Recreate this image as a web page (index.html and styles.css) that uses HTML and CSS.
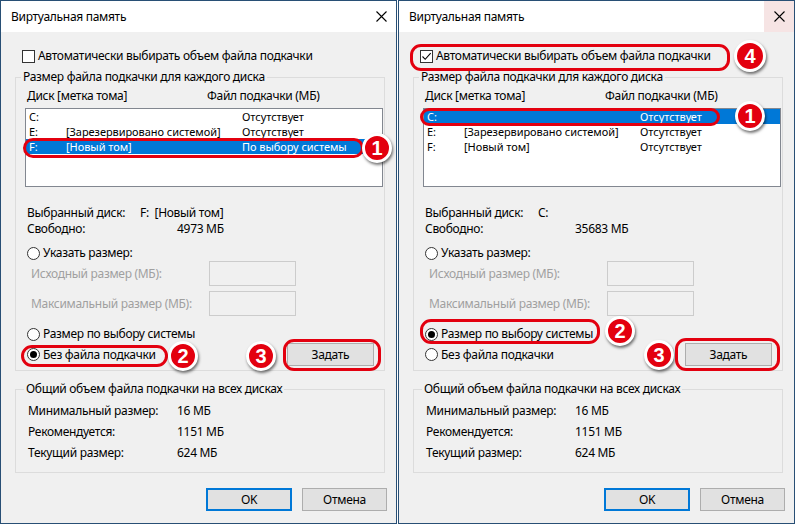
FILE: index.html
```html
<!DOCTYPE html>
<html lang="ru">
<head>
<meta charset="utf-8">
<title>Виртуальная память</title>
<link rel="stylesheet" href="styles.css">
</head>
<body>
<div class="screen">
  <section class="dialog">
    <header class="titlebar">
      <span class="title">Виртуальная память</span>
      <span class="close"><svg width="11" height="11" viewBox="0 0 11 11"><path d="M0.5 0.5L10.5 10.5M10.5 0.5L0.5 10.5" stroke="#000" stroke-width="1.1" fill="none"/></svg></span>
    </header>
    <div class="body">
      <div class="check-row"><span class="checkbox"></span><span>Автоматически выбирать объем файла подкачки</span></div>
      <fieldset class="group drives">
        <legend>Размер файла подкачки для каждого диска</legend>
        <div class="list-head"><span>Диск [метка тома]</span><span>Файл подкачки (МБ)</span></div>
        <div class="listbox">
          <div class="row"><span>C:</span><span></span><span>Отсутствует</span></div>
          <div class="row"><span>E:</span><span>[Зарезервировано системой]</span><span>Отсутствует</span></div>
          <div class="row selected"><span>F:</span><span>[Новый том]</span><span>По выбору системы</span></div>
        </div>
        <div class="info-row first"><span class="k">Выбранный диск:</span><span>F:&nbsp; [Новый том]</span></div>
        <div class="info-row free"><span class="k">Свободно:</span><span>4973 МБ</span></div>
        <div class="radio-row custom"><span class="radio"></span><span>Указать размер:</span></div>
        <div class="size-row"><span class="disabled">Исходный размер (МБ):</span><span class="input"></span></div>
        <div class="size-row second"><span class="disabled">Максимальный размер (МБ):</span><span class="input"></span></div>
        <div class="radio-row system"><span class="radio"></span><span>Размер по выбору системы</span></div>
        <div class="last-row">
          <div class="radio-row"><span class="radio on"></span><span>Без файла подкачки</span></div>
          <span class="btn set">Задать</span>
        </div>
      </fieldset>
      <fieldset class="group totals">
        <legend>Общий объем файла подкачки на всех дисках</legend>
        <div class="total-row"><span class="k">Минимальный размер:</span><span>16 МБ</span></div>
        <div class="total-row"><span class="k">Рекомендуется:</span><span>1151 МБ</span></div>
        <div class="total-row"><span class="k">Текущий размер:</span><span>624 МБ</span></div>
      </fieldset>
      <div class="footer"><span class="btn ok">OK</span><span class="btn cancel">Отмена</span></div>
    </div>
    <span class="mark" style="left:22px;top:137px;width:341px;height:20px"></span>
    <span class="badge" style="left:361px;top:132px">1</span>
    <span class="mark" style="left:20px;top:344px;width:147px;height:22px"></span>
    <span class="badge" style="left:167px;top:340px">2</span>
    <span class="badge" style="left:245px;top:340px">3</span>
    <span class="mark" style="left:282px;top:338px;width:98px;height:32px"></span>
  </section>

  <section class="dialog">
    <header class="titlebar">
      <span class="title">Виртуальная память</span>
      <span class="close hover"><svg width="11" height="11" viewBox="0 0 11 11"><path d="M0.5 0.5L10.5 10.5M10.5 0.5L0.5 10.5" stroke="#000" stroke-width="1.1" fill="none"/></svg></span>
    </header>
    <div class="body">
      <div class="check-row"><span class="checkbox checked"><svg width="11" height="11" viewBox="0 0 11 11"><path d="M1.5 5.5L4.2 8.3L9.7 2.2" stroke="#000" stroke-width="1.1" fill="none"/></svg></span><span>Автоматически выбирать объем файла подкачки</span></div>
      <fieldset class="group drives">
        <legend>Размер файла подкачки для каждого диска</legend>
        <div class="list-head"><span>Диск [метка тома]</span><span>Файл подкачки (МБ)</span></div>
        <div class="listbox">
          <div class="row selected"><span>C:</span><span></span><span>Отсутствует</span></div>
          <div class="row"><span>E:</span><span>[Зарезервировано системой]</span><span>Отсутствует</span></div>
          <div class="row"><span>F:</span><span>[Новый том]</span><span>Отсутствует</span></div>
        </div>
        <div class="info-row first"><span class="k">Выбранный диск:</span><span>C:</span></div>
        <div class="info-row free"><span class="k">Свободно:</span><span>35683 МБ</span></div>
        <div class="radio-row custom"><span class="radio"></span><span>Указать размер:</span></div>
        <div class="size-row"><span class="disabled">Исходный размер (МБ):</span><span class="input"></span></div>
        <div class="size-row second"><span class="disabled">Максимальный размер (МБ):</span><span class="input"></span></div>
        <div class="radio-row system"><span class="radio on"></span><span>Размер по выбору системы</span></div>
        <div class="last-row">
          <div class="radio-row"><span class="radio"></span><span>Без файла подкачки</span></div>
          <span class="btn set">Задать</span>
        </div>
      </fieldset>
      <fieldset class="group totals">
        <legend>Общий объем файла подкачки на всех дисках</legend>
        <div class="total-row"><span class="k">Минимальный размер:</span><span>16 МБ</span></div>
        <div class="total-row"><span class="k">Рекомендуется:</span><span>1151 МБ</span></div>
        <div class="total-row"><span class="k">Текущий размер:</span><span>624 МБ</span></div>
      </fieldset>
      <div class="footer"><span class="btn ok">OK</span><span class="btn cancel">Отмена</span></div>
    </div>
    <span class="mark" style="left:11px;top:43px;width:320px;height:27px"></span>
    <span class="badge big" style="left:335px;top:39px">4</span>
    <span class="mark" style="left:21px;top:107px;width:300px;height:18px"></span>
    <span class="badge" style="left:336px;top:100px">1</span>
    <span class="mark" style="left:21px;top:318px;width:180px;height:25px"></span>
    <span class="badge" style="left:206px;top:315px">2</span>
    <span class="badge" style="left:245px;top:339px">3</span>
    <span class="mark" style="left:276px;top:337px;width:105px;height:33px"></span>
  </section>
</div>
</body>
</html>
```

FILE: styles.css
```css
* { box-sizing: border-box; }
html, body { margin: 0; padding: 0; background: #fff; }
body {
  font-family: "Segoe UI", "Noto Sans", "Liberation Sans", sans-serif;
  font-size: 12px;
  letter-spacing: -0.3px;
  color: #000;
}
.screen { display: flex; gap: 1px; width: 795px; height: 525px; }
.dialog {
  position: relative;
  width: 397px;
  height: 524px;
  border: 1px solid #284f75;
  background: #f0f0f0;
  display: flex;
  flex-direction: column;
  flex: none;
}
.titlebar {
  height: 31px;
  flex: none;
  background: #fff;
  display: flex;
  align-items: center;
  justify-content: space-between;
  padding-left: 10px;
  line-height: 16px;
}
.close {
  width: 30px;
  height: 31px;
  display: flex;
  align-items: center;
  justify-content: center;
}
.close.hover { background: #f6e4e4; }
.body {
  flex: 1;
  display: flex;
  flex-direction: column;
  padding: 0 11px 0 14px;
  line-height: 16px;
}
.check-row {
  margin-top: 16px;
  height: 16px;
  padding-left: 7px;
  display: flex;
  align-items: center;
  gap: 3px;
}
.checkbox {
  width: 13px;
  height: 13px;
  border: 1px solid #333;
  background: #fff;
  display: flex;
  align-items: center;
  justify-content: center;
}
.group {
  margin: 5px 0 0;
  border: 1px solid #dcdcdc;
  min-width: 0;
}
.group legend {
  padding: 0 2px;
  margin-left: -4px;
  line-height: 16px;
}
.drives { padding: 0 1px 4px 9px; }
.list-head {
  padding: 3px 0 0 2px;
  display: grid;
  grid-template-columns: 180px auto;
}
.listbox {
  margin-top: 4px;
  height: 79px;
  border: 1px solid #828790;
  background: #fff;
  line-height: 15px;
}
.row {
  height: 15px;
  padding-left: 3px;
  display: grid;
  grid-template-columns: 37px 176px 1fr;
  align-items: center;
  white-space: nowrap;
  overflow: hidden;
  font-size: 11px;
  letter-spacing: -0.05px;
}
.row.selected { background: #0078d7; color: #fff; }
.info-row { padding-left: 2px; display: flex; height: 16px; }
.info-row.first { margin-top: 18px; }
.info-row .k { width: 113px; }
.info-row.free .k { width: 150px; }
.radio-row {
  height: 16px;
  padding-left: 2px;
  display: flex;
  align-items: center;
  gap: 3px;
}
.radio-row.custom { margin-top: 8px; }
.radio-row.system { margin-top: 10px; }
.radio {
  width: 13px;
  height: 13px;
  border: 1px solid #333;
  border-radius: 50%;
  background: #fff;
  display: flex;
  align-items: center;
  justify-content: center;
}
.radio.on::after {
  content: "";
  width: 7px;
  height: 7px;
  border-radius: 50%;
  background: #000;
}
.size-row {
  height: 25px;
  display: grid;
  grid-template-columns: 184px 87px;
  align-items: center;
}
.size-row.second { margin-top: 5px; }
.disabled { color: #a0a0a0; padding-left: 6px; }
.input {
  height: 25px;
  border: 1px solid #cccccc;
  background: #f0f0f0;
}
.last-row {
  margin-top: 1px;
  height: 23px;
  display: flex;
  align-items: center;
  justify-content: space-between;
}
.btn {
  height: 23px;
  display: flex;
  align-items: center;
  justify-content: center;
  background: #e1e1e1;
  border: 1px solid #adadad;
}
.btn.set { width: 87px; margin-right: 9px; }
.totals { margin-top: 10px; padding: 3px 0 9px 12px; }
.total-row { height: 21px; display: flex; align-items: center; }
.total-row .k { width: 149px; }
.footer {
  margin-top: 15px;
  margin-right: -2px;
  display: flex;
  justify-content: flex-end;
  gap: 10px;
}
.btn.ok { width: 86px; border: 2px solid #0078d7; }
.btn.cancel { width: 85px; }

.mark {
  position: absolute;
  border: 3px solid #e3000f;
  border-radius: 11px;
}
.badge {
  position: absolute;
  width: 30px;
  height: 30px;
  border-radius: 50%;
  background: #e3000f;
  border: 3px solid #fff;
  box-shadow: 1px 2px 3px rgba(0, 0, 0, 0.55);
  color: #fff;
  font-family: "Liberation Sans", Arial, sans-serif;
  font-weight: bold;
  font-size: 20px;
  letter-spacing: 0;
  line-height: 24px;
  text-align: center;
}
.badge.big { width: 32px; height: 32px; line-height: 26px; }
```
